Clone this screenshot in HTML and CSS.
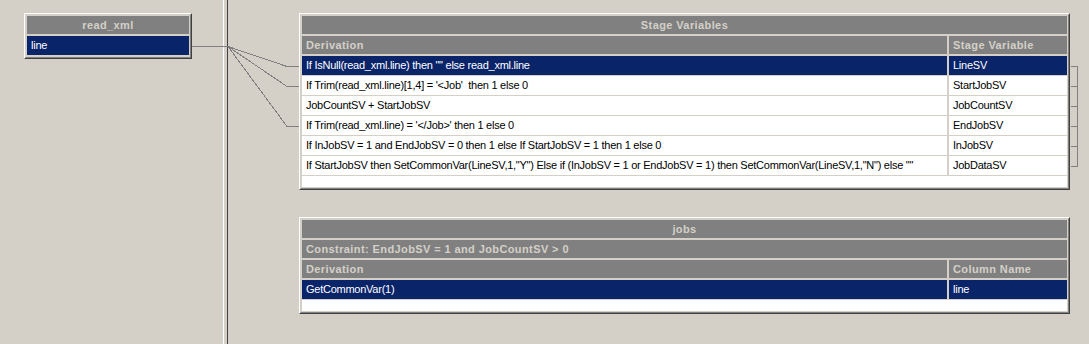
FILE: index.html
```html
<!DOCTYPE html>
<html>
<head>
<meta charset="utf-8">
<title>Transformer</title>
<link rel="stylesheet" href="styles.css">
</head>
<body>
<div class="canvas">
  <div class="pane pane-left">
    <div class="link-box source-box">
      <div class="box-inner">
        <div class="box-title">read_xml</div>
        <div class="grid-row selected"><div class="cell">line</div></div>
      </div>
    </div>
  </div>
  <div class="splitter"></div>
  <div class="pane pane-right">
    <div class="link-box stage-box">
      <div class="box-inner">
        <div class="box-title">Stage Variables</div>
        <div class="grid-row head"><div class="cell deriv">Derivation</div><div class="cell name">Stage Variable</div></div>
        <div class="grid-row selected"><div class="cell deriv">If IsNull(read_xml.line) then "" else read_xml.line</div><div class="cell name">LineSV</div></div>
        <div class="grid-row"><div class="cell deriv">If Trim(read_xml.line)[1,4] = '&lt;Job'&nbsp; then 1 else 0</div><div class="cell name">StartJobSV</div></div>
        <div class="grid-row"><div class="cell deriv">JobCountSV + StartJobSV</div><div class="cell name">JobCountSV</div></div>
        <div class="grid-row"><div class="cell deriv">If Trim(read_xml.line) = '&lt;/Job&gt;' then 1 else 0</div><div class="cell name">EndJobSV</div></div>
        <div class="grid-row"><div class="cell deriv">If InJobSV = 1 and EndJobSV = 0 then 1 else If StartJobSV = 1 then 1 else 0</div><div class="cell name">InJobSV</div></div>
        <div class="grid-row"><div class="cell deriv">If StartJobSV then SetCommonVar(LineSV,1,"Y") Else if (InJobSV = 1 or EndJobSV = 1) then SetCommonVar(LineSV,1,"N") else ""</div><div class="cell name">JobDataSV</div></div>
        <div class="filler"></div>
      </div>
    </div>
    <div class="link-box jobs-box">
      <div class="box-inner">
        <div class="box-title">jobs</div>
        <div class="constraint">Constraint: EndJobSV = 1 and JobCountSV &gt; 0</div>
        <div class="grid-row head"><div class="cell deriv">Derivation</div><div class="cell name">Column Name</div></div>
        <div class="grid-row selected"><div class="cell deriv">GetCommonVar(1)</div><div class="cell name">line</div></div>
        <div class="filler"></div>
      </div>
    </div>
  </div>
  <svg class="links" width="1089" height="344" viewBox="0 0 1089 344" shape-rendering="crispEdges">
    <g fill="none" stroke="#808080" stroke-width="1">
      <path d="M192 46.5 H228"/>
      <path d="M228 46.5 L287 66.5 H299"/>
      <path d="M228 46.5 L287 86.5 H299"/>
      <path d="M228 46.5 L287 126.5 H299"/>
      <path d="M1071 66.5 H1077.5 V166.5 H1071"/>
      <path d="M1071 86.5 H1077.5"/>
      <path d="M1071 106.5 H1077.5"/>
      <path d="M1071 126.5 H1077.5"/>
      <path d="M1071 146.5 H1077.5"/>
    </g>
  </svg>
</div>
</body>
</html>
```
FILE: styles.css
```css
html, body {
  margin: 0;
  padding: 0;
}
body {
  background: #d4d0c8;
  font-family: "Liberation Sans", Arial, sans-serif;
  font-size: 11px;
  overflow: hidden;
}
.canvas {
  position: relative;
  display: flex;
  width: 1089px;
  height: 344px;
}
.pane-left {
  width: 223px;
  flex: none;
  box-sizing: border-box;
  padding: 13px 0 0 24px;
}
.splitter {
  width: 5px;
  flex: none;
  box-sizing: border-box;
  border-left: 1px solid #ffffff;
  border-right: 1px solid #404040;
}
.pane-right {
  flex: 1;
  box-sizing: border-box;
  padding: 13px 0 0 71px;
}
.link-box {
  box-sizing: border-box;
  border: 1px solid;
  border-color: #ffffff #404040 #404040 #ffffff;
}
.box-inner {
  display: flex;
  flex-direction: column;
  border: 1px solid;
  border-color: #d4d0c8 #808080 #808080 #d4d0c8;
  padding: 1px;
  background: #d4d0c8;
}
.source-box {
  width: 168px;
}
.stage-box,
.jobs-box {
  width: 771px;
}
.jobs-box {
  margin-top: 27px;
}
.box-title {
  height: 18px;
  line-height: 18px;
  background: #808080;
  color: #d4d0c8;
  font-weight: bold;
  text-align: center;
  letter-spacing: 0.4px;
  margin-bottom: 2px;
}
.constraint {
  height: 18px;
  line-height: 18px;
  background: #808080;
  color: #d4d0c8;
  font-weight: bold;
  letter-spacing: 0.4px;
  padding-left: 4px;
  margin-bottom: 2px;
  white-space: nowrap;
}
.grid-row {
  display: flex;
  gap: 2px;
  height: 19px;
  line-height: 19px;
  margin-bottom: 1px;
}
.grid-row.head {
  height: 18px;
  line-height: 18px;
  margin-bottom: 2px;
}
.cell {
  flex: 1;
  box-sizing: border-box;
  background: #ffffff;
  color: #000000;
  padding-left: 4px;
  white-space: nowrap;
  overflow: hidden;
  letter-spacing: -0.25px;
}
.cell.deriv {
  flex: none;
  width: 645px;
}
.head .cell {
  background: #808080;
  color: #d4d0c8;
  font-weight: bold;
  letter-spacing: 0.4px;
}
.selected .cell {
  background: #0a246a;
  color: #ffffff;
}
.filler {
  height: 11px;
  background: #ffffff;
}
.links {
  position: absolute;
  left: 0;
  top: 0;
  pointer-events: none;
}
```
